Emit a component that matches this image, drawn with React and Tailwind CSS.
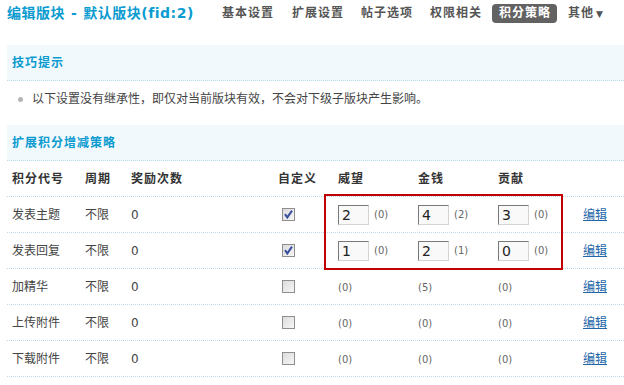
import React from "react";

const F = "font-['DejaVu_Sans','Noto_Sans_CJK_SC',sans-serif]";

function Check({ on }) {
  return (
    <div className="w-[13px] h-[13px] border border-[#8e8e8e] bg-gradient-to-br from-[#dcdcdc] to-[#f6f6f6] flex items-center justify-center ml-[4px]">
      {on && (
        <svg width="11" height="11" viewBox="0 0 11 11">
          <path d="M2 5.2 L4.3 8.4 L9 1.6" stroke="#3b4f9e" strokeWidth="2" fill="none" />
        </svg>
      )}
    </div>
  );
}

function Num({ v, base }) {
  return (
    <div className="flex items-center">
      <div className="w-[31px] h-[20px] border-t border-l border-t-[#7a7a7a] border-l-[#7a7a7a] border-r border-b border-r-[#d4d4d4] border-b-[#d4d4d4] bg-[#f9f9f9] text-[14px] leading-[18px] pl-[3px] text-[#222]">{v}</div>
      <span className="ml-[5px] text-[10px] text-[#666]">({base})</span>
    </div>
  );
}

function Small({ base }) {
  return <span className="text-[10px] text-[#666]">({base})</span>;
}

const rows = [
  { name: "发表主题", on: true, vals: [["2", 0], ["4", 2], ["3", 0]] },
  { name: "发表回复", on: true, vals: [["1", 0], ["2", 1], ["0", 0]] },
  { name: "加精华", on: false, vals: [[null, 0], [null, 5], [null, 0]] },
  { name: "上传附件", on: false, vals: [[null, 0], [null, 0], [null, 0]] },
  { name: "下载附件", on: false, vals: [[null, 0], [null, 0], [null, 0]] },
];

const grid = "grid grid-cols-[73px_46px_147px_60px_80px_80px_85px_1fr] h-[36px] items-center border-b border-dotted border-[#bcdcee]";

export default function App() {
  return (
    <div className={`${F} w-[624px] h-[385px] overflow-hidden bg-white text-[12px] text-[#333] pl-[7px]`}>
      <div className="h-[26px] flex items-center">
        <div className="w-[188px] shrink-0 text-[14px] font-bold text-[#0a9bd0] tracking-[0.5px]">
          编辑版块<span className="mx-[6px]">-</span>默认版块(fid:2)
        </div>
        <div className="flex items-center ml-[27px] text-[12px] font-bold text-[#555] tracking-[1px]">
          <span className="mr-[18px]">基本设置</span>
          <span className="mr-[17px]">扩展设置</span>
          <span className="mr-[17px]">帖子选项</span>
          <span className="mr-[10px]">权限相关</span>
          <span className="bg-[#626262] text-white rounded-[4px] pl-[7px] pr-[6px] h-[19px] leading-[19px]">积分策略</span>
          <span className="ml-[11px]">其他<span className="text-[9px] ml-[2px]">▼</span></span>
        </div>
      </div>

      <div className="mt-[19px] h-[36px] bg-[#f2f9fd] border-b border-dotted border-[#bcdcee] flex items-center pl-[5px] text-[12px] font-bold text-[#0a9bd0] tracking-[1px]">
        技巧提示
      </div>
      <div className="pt-[8px] pb-[15px] h-[44px] flex items-start">
        <span className="w-[5px] h-[5px] rounded-full bg-[#b5b5b5] ml-[11px] mt-[8px]"></span>
        <span className="ml-[9px] leading-[20px] text-[#444]">以下设置没有继承性，即仅对当前版块有效，不会对下级子版块产生影响。</span>
      </div>

      <div className="h-[36px] bg-[#f2f9fd] border-b border-dotted border-[#bcdcee] flex items-center pl-[5px] text-[12px] font-bold text-[#0a9bd0] tracking-[1px]">
        扩展积分增减策略
      </div>

      <div className="relative">
        <div className={`${grid} font-bold tracking-[1px] text-[#333]`}>
          <div className="pl-[5px]">积分代号</div>
          <div className="pl-[5px]">周期</div>
          <div className="pl-[5px]">奖励次数</div>
          <div className="pl-[5px]">自定义</div>
          <div className="pl-[5px]">威望</div>
          <div className="pl-[5px]">金钱</div>
          <div className="pl-[5px]">贡献</div>
          <div></div>
        </div>
        {rows.map((r) => (
          <div key={r.name} className={`${grid} text-[#444]`}>
            <div className="pl-[5px]">{r.name}</div>
            <div className="pl-[5px]">不限</div>
            <div className="pl-[5px]">0</div>
            <div className="pl-[5px]"><Check on={r.on} /></div>
            {r.vals.map(([v, b], i) => (
              <div key={i} className="pl-[5px]">
                {v !== null ? <Num v={v} base={b} /> : <Small base={b} />}
              </div>
            ))}
            <div className="pl-[5px]">
              <span className="text-[#2366a8] underline">编辑</span>
            </div>
          </div>
        ))}
        <div className="absolute left-[317px] top-[33px] w-[239px] h-[76px] border-2 border-[#c00000]"></div>
      </div>
    </div>
  );
}
